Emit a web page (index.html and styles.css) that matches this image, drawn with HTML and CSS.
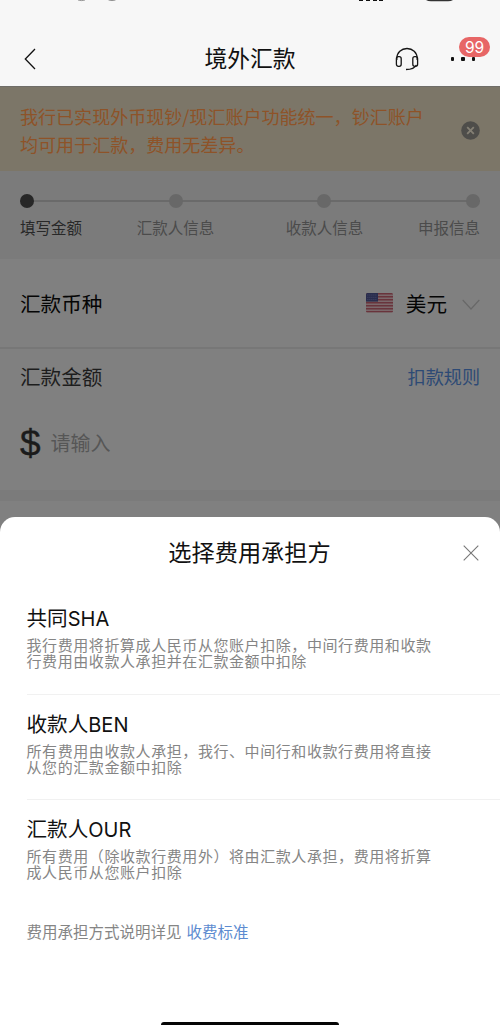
FILE: index.html
```html
<!DOCTYPE html>
<html lang="zh-CN">
<head>
<meta charset="utf-8">
<title>境外汇款</title>
<link rel="stylesheet" href="styles.css">
</head>
<body>
<div class="screen">
  <header class="header">
    <svg class="status" width="500" height="4" viewBox="0 0 500 4">
      <path d="M78 0q3.500 1.200 7 0M108.500 0q3.500 1.200 7 0" fill="none" stroke="#777" stroke-width=".8"/>
      <path d="M359 0h4v1h-4zM366 0h4v1h-4zM373 0h4v1h-4zM379 0h4v1h-4z" fill="#111"/>
      <path d="M426 0h27q-2 1.300-5 1.300h-17q-3 0-5-1.300z" fill="#333"/>
    </svg>
    <div class="navbar">
      <svg class="back" width="12" height="22" viewBox="0 0 12 22"><path d="M11 1 1.300 11 11 21" fill="none" stroke="#111" stroke-width="1.300"/></svg>
      <h1 class="nav-title">境外汇款</h1>
      <div class="nav-actions">
        <svg class="headset" width="24" height="24" viewBox="0 0 24 24" fill="none" stroke="#151515" stroke-width="1.300">
          <path d="M1.800 13V11.500C1.800 5.300 6.400 1.500 12 1.500S22.200 5.300 22.200 11.500V13"/>
          <rect x="1.400" y="9.700" width="4.800" height="9.600" rx="2"/>
          <rect x="17.800" y="9.700" width="4.800" height="9.600" rx="2"/>
          <path d="M21.400 18c-1.500 3-4.800 4.500-10.400 4.500"/>
        </svg>
        <div class="more">
          <i class="dot"></i><i class="dot"></i><i class="dot"></i>
          <span class="badge">99</span>
        </div>
      </div>
    </div>
  </header>

  <section class="notice">
    <p class="notice-text">我行已实现外币现钞/现汇账户功能统一，钞汇账户<br>均可用于汇款，费用无差异。</p>
    <svg width="19" height="19" viewBox="0 0 19 19"><circle cx="9.500" cy="9.500" r="9.300" fill="#4e4d4a"/><path d="m6.200 6.200 6.600 6.600m0-6.600-6.600 6.600" stroke="#858075" stroke-width="1.800"/></svg>
  </section>

  <section class="steps">
    <div class="track"><i class="node active"></i><i class="node"></i><i class="node"></i><i class="node"></i></div>
    <div class="labels"><span class="current">填写金额</span><span>汇款人信息</span><span>收款人信息</span><span>申报信息</span></div>
  </section>

  <section class="currency">
    <span class="field-name strong">汇款币种</span>
    <div class="currency-value">
      <svg width="27" height="20" viewBox="0 0 27 20">
        <defs><clipPath id="flag-edge"><rect width="27" height="19.500" rx="1.500"/></clipPath></defs>
        <g clip-path="url(#flag-edge)">
          <rect width="27" height="20" fill="#7b686b"/>
          <path d="M0 .75h27M0 3.750h27M0 6.750h27M0 9.750h27M0 12.750h27M0 15.750h27M0 18.750h27" stroke="#69343c" stroke-width="1.600"/>
          <rect width="12" height="8.600" fill="#292d4d"/>
          <path d="M1.500 2h10M1.500 4.300h10M1.500 6.600h10" stroke="#55577a" stroke-width=".8" stroke-dasharray=".8 1.200"/>
        </g>
      </svg>
      <span class="field-name strong">美元</span>
      <svg class="chevron" width="18" height="12" viewBox="0 0 18 12"><path d="m.7 1 8.300 9L17.300 1" fill="none" stroke="#686868" stroke-width="1.200"/></svg>
    </div>
  </section>

  <section class="amount">
    <div class="amount-head"><span class="field-name">汇款金额</span><a class="rule-link">扣款规则</a></div>
    <div class="amount-input"><span class="dollar">$</span><span class="placeholder">请输入</span></div>
  </section>
  <div class="section-gap"></div>

  <section class="sheet">
    <div class="sheet-head">
      <h2 class="sheet-title">选择费用承担方</h2>
      <svg class="close" width="16" height="16" viewBox="0 0 16 16"><path d="m.7.700 14.600 14.600m0-14.600L.7 15.300" stroke="#777" stroke-width="1.100"/></svg>
    </div>
    <div class="options">
      <article class="option"><h3 class="option-title">共同<span class="latin">SHA</span></h3><p class="option-text">我行费用将折算成人民币从您账户扣除，中间行费用和收款<br>行费用由收款人承担并在汇款金额中扣除</p></article>
      <article class="option"><h3 class="option-title">收款人<span class="latin">BEN</span></h3><p class="option-text">所有费用由收款人承担，我行、中间行和收款行费用将直接<br>从您的汇款金额中扣除</p></article>
      <article class="option"><h3 class="option-title">汇款人<span class="latin">OUR</span></h3><p class="option-text">所有费用（除收款行费用外）将由汇款人承担，费用将折算<br>成人民币从您账户扣除</p></article>
    </div>
    <p class="fee-note">费用承担方式说明详见<a class="fee-link">收费标准</a></p>
    <div class="home-bar"></div>
  </section>
</div>
</body>
</html>
```
FILE: styles.css
```css
* { box-sizing: border-box; }
body { margin: 0; }
h1, h2, h3, p { margin: 0; font-weight: 400; }
svg { display: block; flex: none; }
.screen {
  position: relative;
  width: 500px;
  height: 1025px;
  overflow: hidden;
  background: #808080;
  font-family: "Noto Sans CJK SC", sans-serif;
  text-spacing-trim: space-all;
  white-space: nowrap;
}

.header { height: 86px; background: #f7f7f7; }
.navbar {
  display: grid;
  grid-template-columns: 1fr auto 1fr;
  align-items: center;
  height: 82px;
  padding: 27px 24px 0;
}
.nav-title { padding-bottom: 1px; font-size: 22.8px; line-height: 32px; color: #111; }
.nav-actions { display: flex; align-items: center; justify-content: flex-end; gap: 32px; }
.more { position: relative; display: flex; gap: 7px; width: 25px; }
.dot { width: 3.300px; height: 4px; border-radius: 1px; background: #111; }
.badge {
  position: absolute;
  left: 8px;
  top: -20px;
  width: 31px;
  height: 20px;
  border-radius: 10px;
  background: #e76666;
  color: #fff;
  font: 15.500px/21px Inter, sans-serif;
  text-align: center;
}

.notice {
  display: flex;
  align-items: center;
  justify-content: space-between;
  height: 85px;
  padding: 2px 20px 0;
  border-top: 1px solid #6f6d68;
  background: #7c7668;
}
.notice-text { font-size: 18.050px; line-height: 28px; color: #8e5328; }

.steps { height: 88px; padding: 23px 20px 0; background: #7b7b7b; }
.track {
  display: flex;
  align-items: center;
  justify-content: space-between;
  height: 14px;
  background: linear-gradient(#6a6a6a, #6a6a6a) center / 100% 2px no-repeat;
}
.node { width: 14px; height: 14px; border-radius: 50%; background: #686868; }
.node.active { background: #272727; }
.labels {
  display: grid;
  grid-template-columns: 78px 155px 143px 84px;
  margin-top: 7px;
  font-size: 15.500px;
  line-height: 24px;
  color: #4b4b4b;
}
.labels span { text-align: center; }
.labels span:first-child { text-align: left; }
.labels span:last-child { text-align: right; }
.labels .current { color: #282828; }

.currency {
  display: flex;
  align-items: center;
  justify-content: space-between;
  height: 90px;
  padding: 0 20px;
  border-bottom: 2px solid #777;
}
.currency-value { display: flex; align-items: center; }
.currency-value .field-name { margin: 0 15px 0 13px; }
.field-name { font-size: 20.600px; line-height: 30px; color: #1d1d1d; }
.field-name.strong { color: #050505; }
.chevron { margin-top: 3px; }

.amount { height: 141px; padding: 12px 20px 0; }
.amount-head { display: flex; align-items: center; justify-content: space-between; }
.rule-link { font-size: 18.100px; line-height: 30px; color: #2d4a75; }
.amount-input { display: flex; align-items: center; gap: 10px; height: 44px; margin-top: 31px; }
.dollar {
  width: 20.500px;
  font: 37px/44px "Liberation Sans", Arial, sans-serif;
  color: #1b1b1b;
  -webkit-text-stroke: .4px #1b1b1b;
}
.placeholder { padding-bottom: 2px; font-size: 20px; line-height: 30px; color: #565656; }
.section-gap { height: 11px; background: #7b7b7b; }

.sheet {
  position: absolute;
  inset: 517px 0 0;
  display: flex;
  flex-direction: column;
  border-radius: 15px 15px 0 0;
  background: #fff;
}
.sheet-head {
  display: grid;
  grid-template-columns: 1fr auto 1fr;
  align-items: center;
  height: 71px;
  padding: 0 21px 0 20px;
}
.sheet-title { grid-column: 2; padding-bottom: 3px; font-size: 23.200px; line-height: 34px; color: #111; }
.close { justify-self: end; }
.options { padding: 1px 0 0 26.500px; }
.option { height: 105.500px; padding-top: 13px; border-bottom: 1px solid #f1f1f1; }
.option:last-child { border: 0; }
.option-title { font-size: 20.600px; line-height: 30px; color: #111; }
.latin { font-family: Inter, sans-serif; font-size: 20px; }
.option-text { margin-top: 3px; font-size: 15px; letter-spacing: .58px; line-height: 16px; color: #858585; }
.fee-note { display: flex; gap: 5px; padding: 13px 26.500px 0; font-size: 15.500px; line-height: 24px; color: #858585; }
.fee-link { color: #5d8bd0; }
.home-bar { width: 178px; height: 6px; margin: auto auto -3px; border-radius: 3px; background: #050505; }
```
